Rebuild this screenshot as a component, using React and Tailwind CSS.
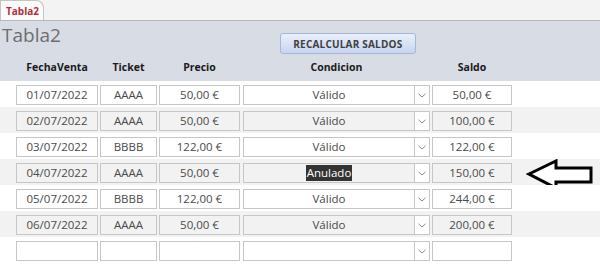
import React from 'react';

const rows = [
  { fecha: '01/07/2022', ticket: 'AAAA', precio: '50,00 €', cond: 'Válido', saldo: '50,00 €' },
  { fecha: '02/07/2022', ticket: 'AAAA', precio: '50,00 €', cond: 'Válido', saldo: '100,00 €' },
  { fecha: '03/07/2022', ticket: 'BBBB', precio: '122,00 €', cond: 'Válido', saldo: '122,00 €' },
  { fecha: '04/07/2022', ticket: 'AAAA', precio: '50,00 €', cond: 'Anulado', saldo: '150,00 €', mark: true },
  { fecha: '05/07/2022', ticket: 'BBBB', precio: '122,00 €', cond: 'Válido', saldo: '244,00 €' },
  { fecha: '06/07/2022', ticket: 'AAAA', precio: '50,00 €', cond: 'Válido', saldo: '200,00 €' },
  { fecha: '', ticket: '', precio: '', cond: '', saldo: '' },
];

const Box = ({ w, children, alt }) => (
  <div
    className={`h-[20px] ${w} border border-[#c6c6c6] flex items-center justify-center text-[11.5px] text-[#4a4a4a] leading-none ${alt ? 'bg-[#f2f2f2]' : 'bg-white'}`}
  >
    {children}
  </div>
);

const Chevron = () => (
  <svg width="8" height="5" viewBox="0 0 8 5">
    <path d="M0.5 0.8 L4 4 L7.5 0.8" fill="none" stroke="#8a8a8a" strokeWidth="1" />
  </svg>
);

const Combo = ({ alt, children }) => (
  <div className={`h-[20px] w-[187px] border border-[#c6c6c6] flex ${alt ? 'bg-[#f2f2f2]' : 'bg-white'}`}>
    <div className="flex-1 flex items-center justify-center text-[11.5px] text-[#4a4a4a] leading-none">{children}</div>
    <div className="w-[15px] border-l border-[#c6c6c6] bg-white flex items-center justify-center">
      <Chevron />
    </div>
  </div>
);

export default function App() {
  return (
    <div className="w-[600px] h-[267px] bg-white overflow-hidden" style={{ fontFamily: '"Open Sans", "Noto Sans", sans-serif' }}>
      {/* tab strip */}
      <div className="h-[21px] bg-[#f3f3f3] border-b border-[#b8b8b8] flex items-end">
        <div className="relative h-[20px] w-[44px] bg-[#fbfbfb] border border-b-0 border-[#c4c4c4] rounded-tr-[8px] flex items-center pl-[5px]">
          <span className="text-[10px] font-bold text-[#b0303a] leading-none">Tabla2</span>
        </div>
      </div>

      {/* header */}
      <div className="h-[60px] bg-[#d7dce5] flex flex-col">
        <div className="h-[38px] flex items-start">
          <div className="pl-[2px] pt-[5px] text-[19px] text-[#6e6e6e] leading-none">Tabla2</div>
          <button className="ml-[219px] mt-[12px] h-[21px] w-[136px] rounded-[3px] border border-[#a3b7dc] bg-gradient-to-b from-[#eaf0fb] to-[#c8d5f0] text-[10px] font-bold text-[#404040] tracking-[0.2px] leading-none">
            RECALCULAR SALDOS
          </button>
        </div>
        <div className="flex pl-[16px] text-[10.5px] font-bold text-[#1a1a1a] leading-none mt-[3px]">
          <div className="w-[82px] text-center">FechaVenta</div>
          <div className="w-[57px] ml-[2px] text-center">Ticket</div>
          <div className="w-[81px] ml-[2px] text-center">Precio</div>
          <div className="w-[187px] ml-[3px] text-center">Condicion</div>
          <div className="w-[80px] ml-[2px] text-center">Saldo</div>
        </div>
      </div>

      {/* rows */}
      {rows.map((r, i) => {
        const alt = i % 2 === 1;
        return (
          <div key={i} className={`relative h-[26px] pt-[4px] pl-[16px] flex items-start ${alt ? 'bg-[#f2f2f2]' : 'bg-white'}`}>
            <Box w="w-[82px]" alt={alt}>{r.fecha}</Box>
            <div className="ml-[2px]"><Box w="w-[57px]" alt={alt}>{r.ticket}</Box></div>
            <div className="ml-[2px]"><Box w="w-[81px]" alt={alt}>{r.precio}</Box></div>
            <div className="ml-[3px]">
              <Combo alt={alt}>
                {r.mark ? (
                  <span className="bg-[#333333] text-white px-[1px] py-[2px]">{r.cond}</span>
                ) : (
                  r.cond
                )}
              </Combo>
            </div>
            <div className="ml-[2px]"><Box w="w-[80px]" alt={alt}>{r.saldo}</Box></div>
            {r.mark && (
              <svg className="absolute left-[526px] top-[0px]" width="70" height="32" viewBox="0 0 70 32">
                <polygon
                  points="3,15 30,2 30,9 65,9 65,23 30,23 30,29"
                  fill="white"
                  stroke="black"
                  strokeWidth="3"
                  strokeLinejoin="miter"
                />
              </svg>
            )}
          </div>
        );
      })}
    </div>
  );
}
